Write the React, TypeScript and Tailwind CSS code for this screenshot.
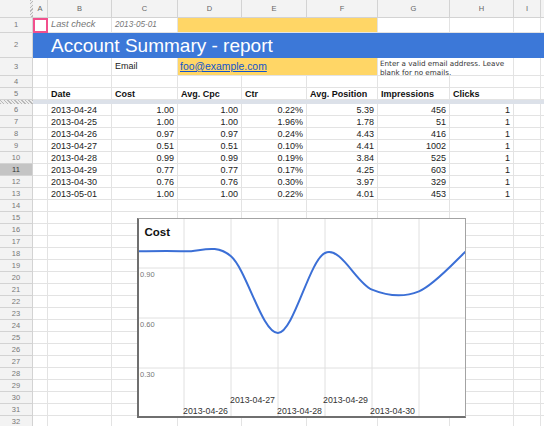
const COL_LETTERS = ["A", "B", "C", "D", "E", "F", "G", "H", "I"];

// widths of columns A..I
const COL_W = [
  "w-[15px]",
  "w-[64px]",
  "w-[66px]",
  "w-[64px]",
  "w-[65px]",
  "w-[71px]",
  "w-[72px]",
  "w-[64px]",
  "w-[27px]",
];

const HEADERS = ["Date", "Cost", "Avg. Cpc", "Ctr", "Avg. Position", "Impressions", "Clicks"];

const ROWS = [
  ["2013-04-24", "1.00", "1.00", "0.22%", "5.39", "456", "1"],
  ["2013-04-25", "1.00", "1.00", "1.96%", "1.78", "51", "1"],
  ["2013-04-26", "0.97", "0.97", "0.24%", "4.43", "416", "1"],
  ["2013-04-27", "0.51", "0.51", "0.10%", "4.41", "1002", "1"],
  ["2013-04-28", "0.99", "0.99", "0.19%", "3.84", "525", "1"],
  ["2013-04-29", "0.77", "0.77", "0.17%", "4.25", "603", "1"],
  ["2013-04-30", "0.76", "0.76", "0.30%", "3.97", "329", "1"],
  ["2013-05-01", "1.00", "1.00", "0.22%", "4.01", "453", "1"],
];

const COST = [1.0, 1.0, 0.97, 0.51, 0.99, 0.77, 0.76, 1.0];

const cell = "shrink-0 border-r border-b border-[#e3e3e3] overflow-hidden whitespace-nowrap";

function RowHead({ n, active }: { n: number; active?: boolean }) {
  return (
    <div
      className={[
        "w-[33px] shrink-0 flex items-center justify-center border-r border-b border-[#d3d3d3] text-[7.5px] not-italic font-normal",
        active ? "bg-[#c4c4c4] text-[#333]" : "bg-[#f3f3f3] text-[#777]",
      ].join(" ")}
    >
      {n}
    </div>
  );
}

function ColumnHeader() {
  return (
    <div className="flex h-[18px]">
      <div className="w-[33px] shrink-0 flex bg-[#f3f3f3] border-b border-[#d3d3d3]">
        <div className="flex-1" />
        <div className="w-[3px] bg-[repeating-linear-gradient(135deg,#b9b9b9_0px,#b9b9b9_1px,#ececec_1px,#ececec_2.5px)]" />
      </div>
      {COL_LETTERS.map((l, i) => (
        <div
          key={l}
          className={`${COL_W[i]} shrink-0 flex items-center justify-center bg-[#f3f3f3] border-r border-b border-[#d3d3d3] text-[7.5px] text-[#666]`}
        >
          {l}
        </div>
      ))}
      <div className="flex-1 bg-[#f3f3f3] border-b border-[#d3d3d3]" />
    </div>
  );
}

function EmptyRow({ n }: { n: number }) {
  return (
    <div className="flex h-[12px]">
      <RowHead n={n} />
      {COL_W.map((w, i) => (
        <div key={i} className={`${w} ${cell}`} />
      ))}
      <div className="flex-1 border-b border-[#e3e3e3]" />
    </div>
  );
}

function DataRow({ n, values }: { n: number; values: string[] }) {
  return (
    <div className="flex h-[12px] text-[9px] leading-[12px] text-[#222]">
      <RowHead n={n} active={n === 11} />
      <div className={`${COL_W[0]} ${cell}`} />
      <div className={`${COL_W[1]} ${cell} pl-[3px]`}>{values[0]}</div>
      {values.slice(1).map((v, i) => (
        <div key={i} className={`${COL_W[i + 2]} ${cell} pr-[3px] text-right`}>
          {v}
        </div>
      ))}
      <div className={`${COL_W[8]} ${cell}`} />
      <div className="flex-1 border-b border-[#e3e3e3]" />
    </div>
  );
}

function costPath() {
  const pts = COST.map((v, i) => [-2 + 47 * i, 199 - 166.67 * v]);
  let d = `M${pts[0][0]},${pts[0][1].toFixed(2)}`;
  for (let i = 0; i < pts.length - 1; i++) {
    const p0 = pts[Math.max(0, i - 1)];
    const p1 = pts[i];
    const p2 = pts[i + 1];
    const p3 = pts[Math.min(pts.length - 1, i + 2)];
    const c1x = p1[0] + (p2[0] - p0[0]) / 6;
    const c1y = p1[1] + (p2[1] - p0[1]) / 6;
    const c2x = p2[0] - (p3[0] - p1[0]) / 6;
    const c2y = p2[1] - (p3[1] - p1[1]) / 6;
    d += ` C${c1x.toFixed(2)},${c1y.toFixed(2)} ${c2x.toFixed(2)},${c2y.toFixed(2)} ${p2[0]},${p2[1].toFixed(2)}`;
  }
  return d;
}

function CostChart() {
  const xLabels = [
    { t: "2013-04-26", x: 44, y: 195 },
    { t: "2013-04-27", x: 91, y: 184 },
    { t: "2013-04-28", x: 138, y: 195 },
    { t: "2013-04-29", x: 184, y: 184 },
    { t: "2013-04-30", x: 231, y: 195 },
  ];
  return (
    <div className="absolute left-[137px] top-[218px] w-[329px] h-[200px] bg-white border-t border-r border-[#a3a3a3] border-l-2 border-b-2 border-l-[#6f6f6f] border-b-[#6f6f6f]">
      <svg width="326" height="197" viewBox="0 0 326 197" className="block overflow-hidden">
        {[45, 92, 139, 186, 233, 280].map((x) => (
          <line key={x} x1={x} y1={0} x2={x} y2={197} stroke="#e0e0e0" strokeWidth="1" />
        ))}
        {[49, 99, 149].map((y) => (
          <line key={y} x1={0} y1={y} x2={326} y2={y} stroke="#e0e0e0" strokeWidth="1" />
        ))}
        <g fontFamily="'Liberation Sans', Arial, sans-serif" fontSize="7.5" fill="#777">
          <text x="1" y="58">0.90</text>
          <text x="1" y="108">0.60</text>
          <text x="1" y="158">0.30</text>
        </g>
        <text
          x="5.5"
          y="16.5"
          fontFamily="'Liberation Sans', Arial, sans-serif"
          fontSize="11.5"
          fontWeight="bold"
          fill="#111"
        >
          Cost
        </text>
        <path d={costPath()} fill="none" stroke="#3b6fd6" strokeWidth="2" strokeLinejoin="round" />
        <g fontFamily="'Liberation Sans', Arial, sans-serif" fontSize="8.8" fill="#333">
          {xLabels.map((l) => (
            <text key={l.t} x={l.x} y={l.y}>
              {l.t}
            </text>
          ))}
        </g>
      </svg>
    </div>
  );
}

export default function App() {
  return (
    <div className="relative w-[544px] h-[426px] overflow-hidden bg-white font-['Liberation_Sans',Arial,sans-serif]">
      <ColumnHeader />

      {/* row 1 */}
      <div className="flex h-[15px] text-[#777]">
        <RowHead n={1} />
        <div className={`${COL_W[0]} shrink-0 border-2 border-[#f2508d]`} />
        <div className={`${COL_W[1]} ${cell} pl-[3px] flex items-center italic text-[9.3px]`}>Last check</div>
        <div className={`${COL_W[2]} ${cell} pl-[3px] flex items-center italic text-[8.2px]`}>2013-05-01</div>
        <div className="w-[200px] shrink-0 bg-[#ffd666] border-r border-b border-[#e3e3e3]" />
        <div className={`${COL_W[6]} ${cell}`} />
        <div className={`${COL_W[7]} ${cell}`} />
        <div className={`${COL_W[8]} ${cell}`} />
        <div className="flex-1 border-b border-[#e3e3e3]" />
      </div>

      {/* row 2 */}
      <div className="flex h-[25px]">
        <RowHead n={2} />
        <div className="flex-1 bg-[#3c78d8] pl-[18px] flex items-center text-[19px] text-white leading-none">
          Account Summary - report
        </div>
      </div>

      {/* row 3 */}
      <div className="flex h-[18px] text-[9px] text-[#222]">
        <RowHead n={3} />
        <div className={`${COL_W[0]} ${cell}`} />
        <div className={`${COL_W[1]} ${cell}`} />
        <div className={`${COL_W[2]} ${cell} pl-[3px] flex items-center`}>Email</div>
        <div className="w-[200px] shrink-0 bg-[#ffd666] border-r border-b border-[#e3e3e3] pl-[2px] flex items-center">
          <span className="text-[#1155cc] underline text-[10.4px]">foo@example.com</span>
        </div>
        <div className="w-[136px] shrink-0 border-r border-b border-[#e3e3e3] pl-[2px] pt-[1px] font-['DejaVu_Sans',sans-serif] text-[7.2px] leading-[9px] text-[#333]">
          Enter a valid email address. Leave blank for no emails.
        </div>
        <div className={`${COL_W[8]} ${cell}`} />
        <div className="flex-1 border-b border-[#e3e3e3]" />
      </div>

      <EmptyRow n={4} />

      {/* row 5 */}
      <div className="flex h-[12px] text-[9px] leading-[12px] font-bold text-[#111]">
        <RowHead n={5} />
        <div className={`${COL_W[0]} ${cell}`} />
        {HEADERS.map((h, i) => (
          <div key={h} className={`${COL_W[i + 1]} ${cell} pl-[3px]`}>
            {h}
          </div>
        ))}
        <div className={`${COL_W[8]} ${cell}`} />
        <div className="flex-1 border-b border-[#e3e3e3]" />
      </div>

      {/* frozen divider */}
      <div className="flex h-[4px]">
        <div className="w-[33px] shrink-0 bg-[repeating-linear-gradient(45deg,#b9b9b9_0px,#b9b9b9_1px,#ececec_1px,#ececec_2.5px)]" />
        <div className="flex-1 bg-[#dce1e9]" />
      </div>

      {ROWS.map((r, i) => (
        <DataRow key={i} n={i + 6} values={r} />
      ))}

      {Array.from({ length: 19 }, (_, i) => (
        <EmptyRow key={i} n={i + 14} />
      ))}

      <CostChart />
    </div>
  );
}
